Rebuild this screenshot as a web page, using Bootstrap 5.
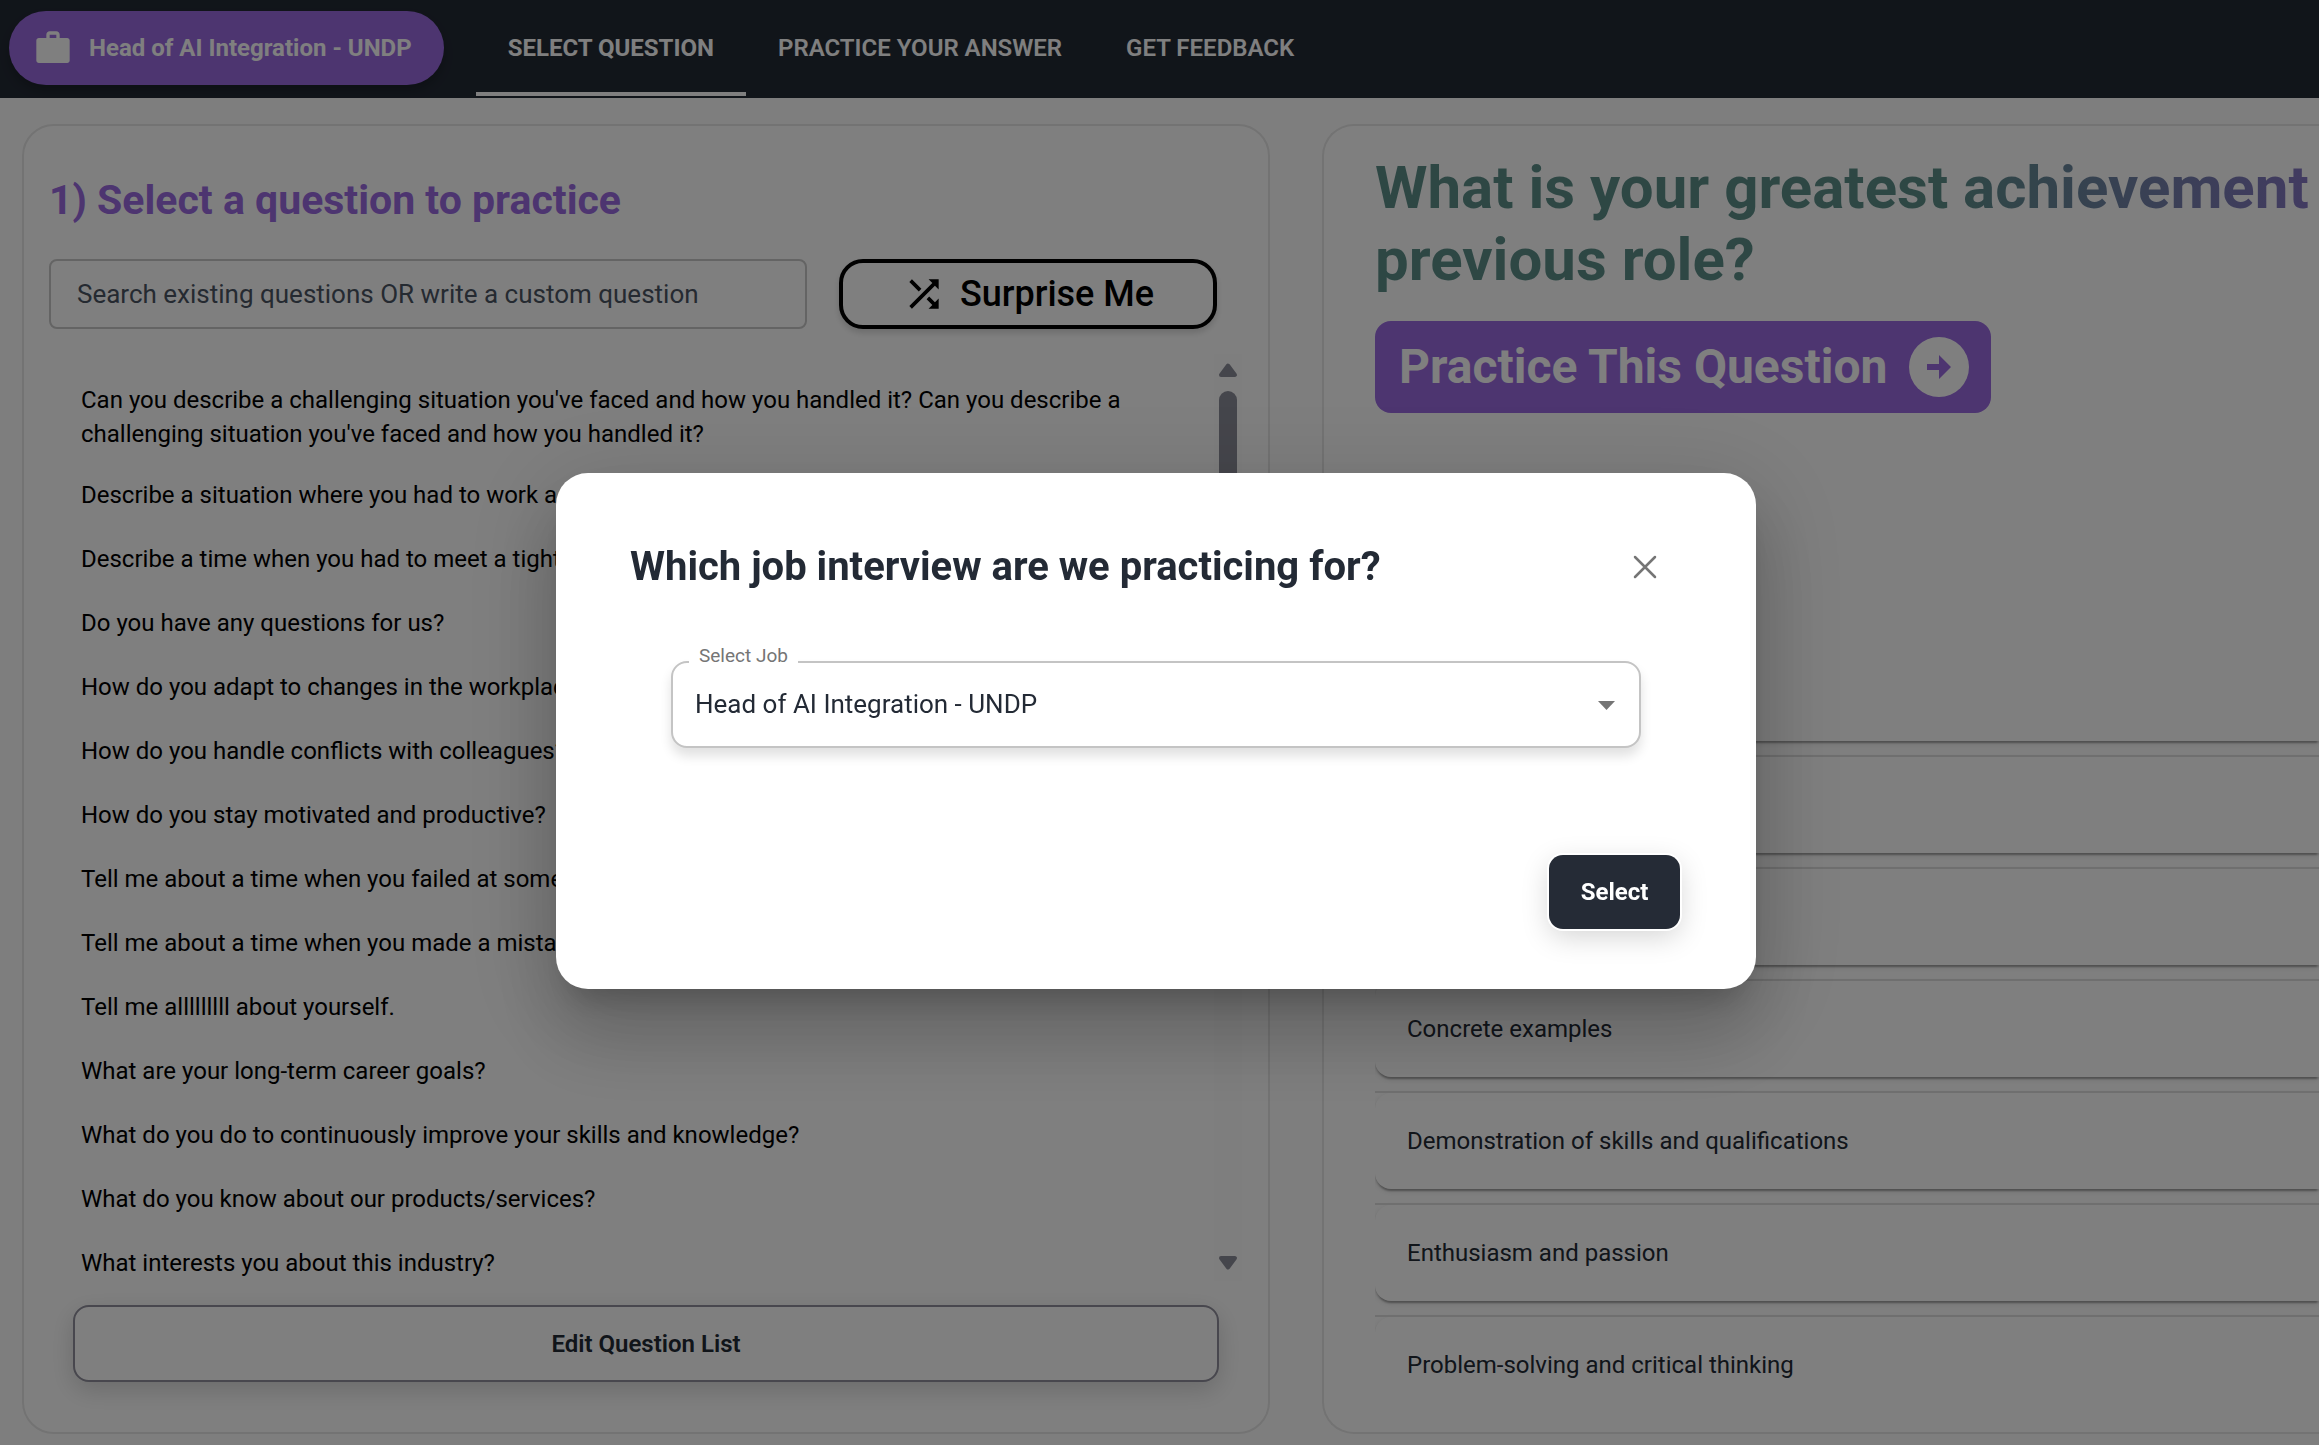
<!DOCTYPE html>
<html lang="en">
<head>
<meta charset="utf-8">
<meta name="viewport" content="width=device-width, initial-scale=1">
<title>Interview practice</title>
<link rel="stylesheet" href="https://cdn.jsdelivr.net/npm/bootstrap@5.3.0/dist/css/bootstrap.min.css">
<style>
  :root { --ink: #232a35; --violet: #9a6ae1; --line: #e6e6e6; }
  body { font-family: Roboto, "Liberation Sans", sans-serif; font-size: 24px; line-height: 34px; color: var(--ink); background: #fdfdfd; }
  h1, h2, h3 { margin: 0; }

  .topbar { height: 98px; background: var(--ink); padding-left: 9px; }
  .job-pill { height: 74px; margin: 11px 32px 0 0; padding: 0 32px 0 24px; gap: 16px; border: 0; border-radius: 37px; background: var(--violet); color: #fff; font-size: 24px; font-weight: 700; box-shadow: 0 6px 10px rgba(0,0,0,.2); }
  .tab-link { height: 96px; padding: 0 32px; color: #fff; font-weight: 600; text-decoration: none; border-top: 4px solid transparent; border-bottom: 4px solid transparent; }
  .tab-link.active { font-weight: 700; border-bottom-color: #fff; }

  .board { padding: 26px 0 11px 22px; gap: 52px; min-height: 0; }
  .panel { border: 2px solid var(--line); border-radius: 32px; background: #fff; min-height: 0; }
  .panel-pick { flex: 0 0 54vw; max-width: 1248px; padding: 48px 26px 50px 25px; }
  .pick-title { font-size: 41px; line-height: 52px; font-weight: 700; color: var(--violet); margin-bottom: 33px; }
  .search-row { gap: 32px; margin-bottom: 25px; padding-right: 25px; }
  .search-box { height: 70px; border: 2px solid #c8c8c8; border-radius: 8px; padding: 0 26px; font-size: 26px; }
  .search-box::placeholder { color: #4b5563; opacity: 1; }
  .btn-surprise { width: 378px; flex: none; height: 70px; border: 4px solid #000; border-radius: 24px; background: #fff; color: #000; font-size: 36px; font-weight: 500; gap: 14px; box-shadow: 0 4px 6px rgba(0,0,0,.15); }

  .question-area { min-height: 0; margin-bottom: 24px; }
  .question-list { padding: 17px 79px 0 32px; overflow: hidden; color: #000; }
  .question-list li { min-height: 64px; padding: 12px 0; flex: none; }
  .scroller { width: 28px; background: #fcfcfc; padding: 8px 0 10px; flex: none; }
  .scroller-thumb { width: 18px; height: 290px; border-radius: 9px; background: #8b8c98; margin-top: 13px; }
  .btn-edit { height: 78px; border: 2px solid #908f9c; border-radius: 16px; background: #fff; color: var(--ink); font-size: 24px; font-weight: 600; margin: 0 23px 0 24px; box-shadow: 0 8px 24px rgba(0,0,0,.16); }

  .panel-detail { flex: 1 1 0; min-width: 0; padding: 26px 0 36px 51px; }
  .question-title { font-size: 60px; line-height: 72px; font-weight: 700; background: linear-gradient(90deg, #5c8e89 60%, #9a6ae1 120%); -webkit-background-clip: text; background-clip: text; color: transparent; margin-bottom: 25px; }
  .btn-practice { height: 92px; border: 0; border-radius: 16px; background: var(--violet); color: #fff; font-size: 48px; font-weight: 700; padding: 0 22px 0 24px; gap: 22px; }
  .tips { margin-top: 232px; gap: 16px; overflow: hidden; min-height: 0; }
  .tip { height: 96px; flex: none; padding: 0 32px; border-radius: 16px 0 0 16px; background: #fff; position: relative; box-shadow: 0 4px 2px -2px rgba(0,0,0,.2), 0 2px 2px rgba(0,0,0,.14), 0 2px 6px rgba(0,0,0,.12); }
  .tip + .tip::before { content: ""; position: absolute; left: 0; right: 0; top: -2px; height: 2px; background: #dedede; }

  .modal-backdrop { --bs-backdrop-opacity: .5; }
  .job-modal { padding: 0 7px 0 0; }
  .job-modal .modal-dialog { max-width: 1200px; padding-top: 17px; }
  .job-modal .modal-content { border: 0; border-radius: 32px; color: var(--ink); box-shadow: 0 22px 30px -14px rgba(0,0,0,.2), 0 48px 76px 6px rgba(0,0,0,.14), 0 18px 92px 16px rgba(0,0,0,.12); padding: 68px 76px 60px 74px; }
  .job-title { font-size: 40px; line-height: 52px; font-weight: 700; }
  .btn-x { border: 0; background: none; padding: 0; margin-right: 23px; color: #757575; line-height: 0; }
  .job-field { margin: 68px 39px 107px 41px; }
  .job-select { height: 87px; border: 2px solid #c4c4c4; border-radius: 16px; padding: 0 60px 0 22px; font-size: 26px; color: var(--ink); background: #fff; box-shadow: 0 8px 12px rgba(0,0,0,.12); }
  .job-label { position: absolute; left: 18px; top: -18px; padding: 0 10px; font-size: 19px; line-height: 26px; color: #757575; background: #fff; }
  .job-caret { position: absolute; right: 26px; top: 40px; pointer-events: none; }
  .btn-choose { width: 131px; height: 74px; border: 0; border-radius: 14px; background: #252b36; color: #fff; font-size: 24px; font-weight: 700; box-shadow: 0 0 0 2px #fff, 0 8px 28px rgba(0,0,0,.17); }
  svg { flex: none; display: block; }
</style>
<script src="https://cdn.jsdelivr.net/npm/bootstrap@5.3.0/dist/js/bootstrap.bundle.min.js"></script>
</head>
<body class="vh-100 overflow-hidden d-flex flex-column">

<header class="topbar d-flex align-items-start flex-shrink-0">
  <button type="button" class="job-pill d-flex align-items-center text-nowrap">
    <svg width="40" height="40" viewBox="0 0 24 24" fill="currentColor" aria-hidden="true"><path d="M20.500 6H16V4c0-1.100-.9-2-2-2h-4C8.900 2 8 2.900 8 4v2H3.500C2.700 6 2 6.700 2 7.500v12c0 .8.7 1.500 1.500 1.500h17c.8 0 1.500-.7 1.500-1.500v-12c0-.8-.7-1.500-1.500-1.500zM14 6h-4V4h4z"/></svg>
    Head of AI Integration - UNDP
  </button>
  <nav class="d-flex text-nowrap" aria-label="Steps">
    <a href="#" class="tab-link active d-flex align-items-center" aria-current="page">SELECT QUESTION</a>
    <a href="#" class="tab-link d-flex align-items-center">PRACTICE YOUR ANSWER</a>
    <a href="#" class="tab-link d-flex align-items-center">GET FEEDBACK</a>
  </nav>
</header>

<main class="board d-flex flex-grow-1">
  <section class="panel panel-pick d-flex flex-column">
    <h2 class="pick-title">1) Select a question to practice</h2>
    <div class="search-row d-flex">
      <input type="text" class="form-control search-box" placeholder="Search existing questions OR write a custom question" aria-label="Search existing questions">
      <button type="button" class="btn-surprise d-flex align-items-center justify-content-center">
        <svg width="44" height="44" viewBox="0 0 24 24" fill="currentColor" aria-hidden="true"><path d="M10.590 9.170 5.410 4 4 5.410l5.170 5.170zM14.500 4l2.040 2.040L4 18.590 5.410 20 17.960 7.460 20 9.500V4zm.33 9.410-1.410 1.410 3.130 3.130L14.500 20H20v-5.500l-2.040 2.040z"/></svg>
        Surprise Me
      </button>
    </div>
    <div class="question-area d-flex flex-grow-1">
      <ul class="question-list list-unstyled d-flex flex-column flex-grow-1 mb-0">
        <li class="d-flex align-items-center">Can you describe a challenging situation you've faced and how you handled it? Can you describe a challenging situation you've faced and how you handled it?</li>
        <li class="d-flex align-items-center">Describe a situation where you had to work as part of a team.</li>
        <li class="d-flex align-items-center">Describe a time when you had to meet a tight deadline.</li>
        <li class="d-flex align-items-center">Do you have any questions for us?</li>
        <li class="d-flex align-items-center">How do you adapt to changes in the workplace?</li>
        <li class="d-flex align-items-center">How do you handle conflicts with colleagues?</li>
        <li class="d-flex align-items-center">How do you stay motivated and productive?</li>
        <li class="d-flex align-items-center">Tell me about a time when you failed at something.</li>
        <li class="d-flex align-items-center">Tell me about a time when you made a mistake.</li>
        <li class="d-flex align-items-center">Tell me alllllllll about yourself.</li>
        <li class="d-flex align-items-center">What are your long-term career goals?</li>
        <li class="d-flex align-items-center">What do you do to continuously improve your skills and knowledge?</li>
        <li class="d-flex align-items-center">What do you know about our products/services?</li>
        <li class="d-flex align-items-center">What interests you about this industry?</li>
      </ul>
      <div class="scroller d-flex flex-column align-items-center" aria-hidden="true">
        <svg width="20" height="16" viewBox="0 0 20 16"><path d="M10 3.500 17 13H3z" fill="#8b8c98" stroke="#8b8c98" stroke-width="4" stroke-linejoin="round"/></svg>
        <div class="scroller-thumb"></div>
        <svg class="mt-auto" width="20" height="16" viewBox="0 0 20 16"><path d="M10 12.500 17 3H3z" fill="#8b8c98" stroke="#8b8c98" stroke-width="4" stroke-linejoin="round"/></svg>
      </div>
    </div>
    <button type="button" class="btn-edit">Edit Question List</button>
  </section>

  <section class="panel panel-detail border-end-0 rounded-end-0 d-flex flex-column">
    <h1 class="question-title">What is your greatest achievement<br>previous role?</h1>
    <button type="button" class="btn-practice d-flex align-items-center align-self-start text-nowrap flex-shrink-0">
      Practice This Question
      <svg width="60" height="60" viewBox="0 0 60 60" aria-hidden="true"><circle cx="30" cy="30" r="30" fill="#fff"/><path d="M18 27h12v-9l12 12-12 12v-9H18z" fill="#9a6ae1"/></svg>
    </button>
    <div class="tips d-flex flex-column">
      <div class="tip"></div>
      <div class="tip"></div>
      <div class="tip"></div>
      <div class="tip d-flex align-items-center">Concrete examples</div>
      <div class="tip d-flex align-items-center">Demonstration of skills and qualifications</div>
      <div class="tip d-flex align-items-center">Enthusiasm and passion</div>
      <div class="tip d-flex align-items-center">Problem-solving and critical thinking</div>
    </div>
  </section>
</main>

<div class="modal-backdrop show"></div>
<div class="modal job-modal show d-block" role="dialog" aria-modal="true" aria-labelledby="jobTitle">
  <div class="modal-dialog modal-dialog-centered my-0 min-vh-100">
    <div class="modal-content">
      <div class="d-flex align-items-center justify-content-between">
        <h3 class="job-title" id="jobTitle">Which job interview are we practicing for?</h3>
        <button type="button" class="btn-x" aria-label="Close">
          <svg width="24" height="24" viewBox="0 0 24 24" fill="none" stroke="currentColor" stroke-width="2.500" stroke-linecap="round" aria-hidden="true"><path d="M2 2l20 20M22 2 2 22"/></svg>
        </button>
      </div>
      <div class="job-field position-relative">
        <select class="form-select job-select" id="jobSelect">
          <option selected>Head of AI Integration - UNDP</option>
        </select>
        <label class="job-label" for="jobSelect">Select Job</label>
        <svg class="job-caret" width="17" height="9" viewBox="0 0 17 9" aria-hidden="true"><path d="M0 0h17L8.500 9z" fill="#757575"/></svg>
      </div>
      <button type="button" class="btn-choose align-self-end">Select</button>
    </div>
  </div>
</div>
</body>
</html>
